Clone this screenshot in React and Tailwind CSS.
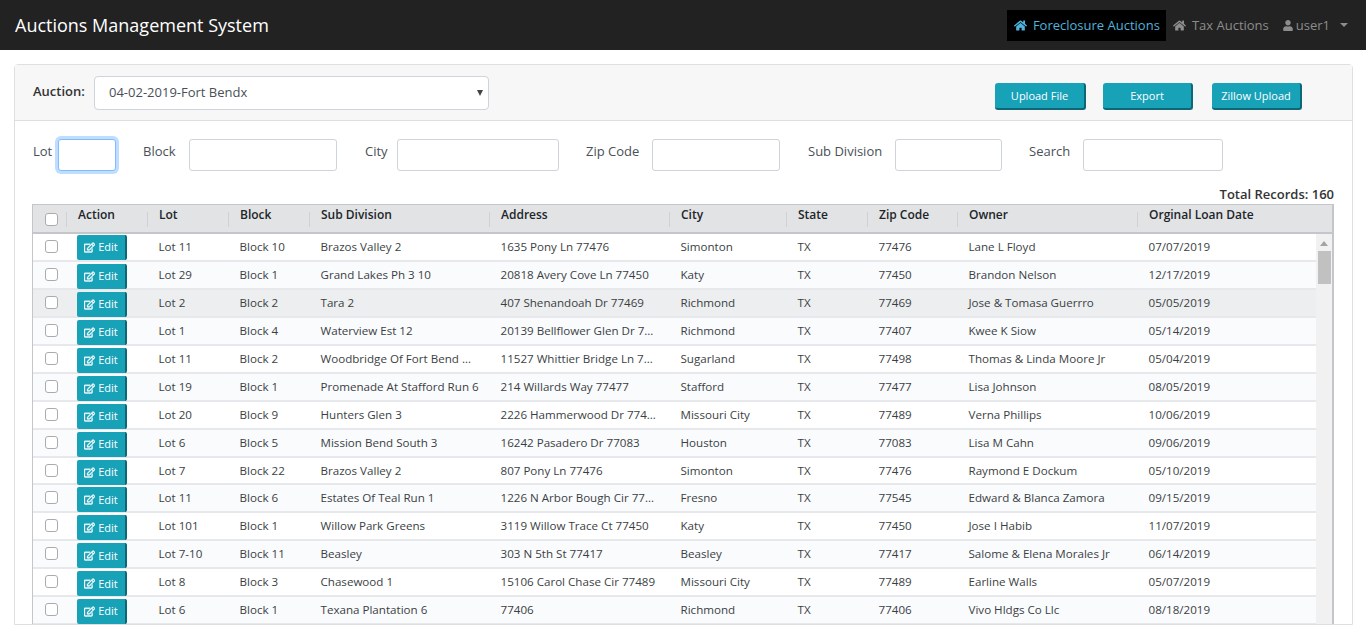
import React from "react";
import { FaHome, FaUser, FaRegEdit } from "react-icons/fa";

const rows = [
  ["Lot 11","Block 10","Brazos Valley 2","1635 Pony Ln 77476","Simonton","TX","77476","Lane L Floyd","07/07/2019"],
  ["Lot 29","Block 1","Grand Lakes Ph 3 10","20818 Avery Cove Ln 77450","Katy","TX","77450","Brandon Nelson","12/17/2019"],
  ["Lot 2","Block 2","Tara 2","407 Shenandoah Dr 77469","Richmond","TX","77469","Jose & Tomasa Guerrro","05/05/2019"],
  ["Lot 1","Block 4","Waterview Est 12","20139 Bellflower Glen Dr 77407","Richmond","TX","77407","Kwee K Siow","05/14/2019"],
  ["Lot 11","Block 2","Woodbridge Of Fort Bend Sec 5","11527 Whittier Bridge Ln 77498","Sugarland","TX","77498","Thomas & Linda Moore Jr","05/04/2019"],
  ["Lot 19","Block 1","Promenade At Stafford Run 6","214 Willards Way 77477","Stafford","TX","77477","Lisa Johnson","08/05/2019"],
  ["Lot 20","Block 9","Hunters Glen 3","2226 Hammerwood Dr 77489","Missouri City","TX","77489","Verna Phillips","10/06/2019"],
  ["Lot 6","Block 5","Mission Bend South 3","16242 Pasadero Dr 77083","Houston","TX","77083","Lisa M Cahn","09/06/2019"],
  ["Lot 7","Block 22","Brazos Valley 2","807 Pony Ln 77476","Simonton","TX","77476","Raymond E Dockum","05/10/2019"],
  ["Lot 11","Block 6","Estates Of Teal Run 1","1226 N Arbor Bough Cir 77545","Fresno","TX","77545","Edward & Blanca Zamora","09/15/2019"],
  ["Lot 101","Block 1","Willow Park Greens","3119 Willow Trace Ct 77450","Katy","TX","77450","Jose I Habib","11/07/2019"],
  ["Lot 7-10","Block 11","Beasley","303 N 5th St 77417","Beasley","TX","77417","Salome & Elena Morales Jr","06/14/2019"],
  ["Lot 8","Block 3","Chasewood 1","15106 Carol Chase Cir 77489","Missouri City","TX","77489","Earline Walls","05/07/2019"],
  ["Lot 6","Block 1","Texana Plantation 6","77406","Richmond","TX","77406","Vivo Hldgs Co Llc","08/18/2019"],
];

const heads = ["Action","Lot","Block","Sub Division","Address","City","State","Zip Code","Owner","Orginal Loan Date"];
const gridCols = "grid grid-cols-[33px_81px_81px_81px_180px_180px_117px_81px_90px_180px_1fr]";
const checkbox = "appearance-none block w-[13px] h-[13px] ml-[4px] rounded-[3px] border border-[#a9acaf] bg-white";

function Filter({ label, labelClass, inputClass, focus }) {
  return (
    <div className="flex items-center">
      <label className={`-mt-[6px] ${labelClass}`}>{label}</label>
      <input
        className={`h-[32px] rounded-[3px] bg-white outline-none ${inputClass} ${focus ? "border border-[#80bdff] shadow-[0_0_0_3px_#bfdeff]" : "border border-[#ced4da]"}`}
      />
    </div>
  );
}

function ActionButton({ label, w, ml }) {
  return (
    <button className={`h-[27px] mt-[8px] pt-[2px] ${w} ${ml} rounded-[3px] bg-[#17a2b8] border-r-2 border-b-2 border-[#0f6674] text-white text-[11px] font-medium`}>
      {label}
    </button>
  );
}

export default function App() {
  return (
    <div className="h-[625px] overflow-hidden bg-white text-[#212529] font-['Open_Sans',sans-serif] flex flex-col">
      <nav className="h-[50px] shrink-0 bg-[#222222] flex items-center pl-[15px] pr-[18px]">
        <div className="text-white text-[18px]">Auctions Management System</div>
        <div className="ml-auto flex items-center text-[13px] text-[#8c8c8c] leading-[20px]">
          <div className="h-[31px] w-[159px] bg-black text-[#4fb3dc] flex items-center pl-[7px] gap-[6px] mt-[1px]">
            <FaHome className="w-[13px] h-[13px] -mt-[1px]" />
            <span className="-mt-[1px]">Foreclosure Auctions</span>
          </div>
          <div className="flex items-center gap-[6px] ml-[7px]">
            <FaHome className="w-[13px] h-[13px]" />
            <span>Tax Auctions</span>
          </div>
          <div className="flex items-center gap-[3px] ml-[14px]">
            <FaUser className="w-[10px] h-[11px]" />
            <span>user1</span>
            <span className="ml-[7px] w-0 h-0 border-x-[4px] border-x-transparent border-t-[4px] border-t-[#8c8c8c]" />
          </div>
        </div>
      </nav>

      <div className="flex-1 min-h-0 pt-[14px] pl-[14px] pr-[13px]">
        <div className="h-full border border-[#dfdfdf] rounded-t-[4px] flex flex-col">
          <div className="h-[56px] shrink-0 bg-[#f7f7f7] border-b border-[#dfdfdf] flex items-center pl-[18px]">
            <label className="text-[13px] font-semibold w-[61px] text-[#333] -mt-[1px]">Auction:</label>
            <div className="relative w-[395px] h-[34px]">
              <select
                defaultValue="a"
                className="appearance-none h-full w-full rounded-[4px] border border-[#ced4da] bg-white text-[13px] text-[#495057] pl-[14px] outline-none"
              >
                <option value="a">04-02-2019-Fort Bendx</option>
              </select>
              <span className="absolute right-[6px] top-[14px] w-0 h-0 border-x-[3px] border-x-transparent border-t-[6px] border-t-[#444]" />
            </div>
            <ActionButton label="Upload File" w="w-[91px]" ml="ml-[506px]" />
            <ActionButton label="Export" w="w-[90px]" ml="ml-[17px]" />
            <ActionButton label="Zillow Upload" w="w-[90px]" ml="ml-[19px]" />
          </div>

          <div className="flex-1 min-h-0 flex flex-col pl-[17px] pr-[18px]">
            <div className="flex items-center h-[34px] mt-[17px] shrink-0 text-[13px] text-[#495057]">
              <Filter label="Lot" labelClass="w-[26px] pl-px" inputClass="w-[58px]" focus />
              <Filter label="Block" labelClass="w-[46px] ml-[27px]" inputClass="w-[148px]" />
              <Filter label="City" labelClass="w-[32px] ml-[28px]" inputClass="w-[162px]" />
              <Filter label="Zip Code" labelClass="w-[66px] ml-[27px]" inputClass="w-[128px]" />
              <Filter label="Sub Division" labelClass="w-[87px] ml-[28px]" inputClass="w-[107px]" />
              <Filter label="Search" labelClass="w-[54px] ml-[27px]" inputClass="w-[140px]" />
            </div>
            <div className="h-[15px] mt-[15px] text-right text-[13px] font-semibold text-[#333] leading-[15px] shrink-0">
              Total Records: 160
            </div>

            <div className="mt-[2px] flex-1 min-h-0 border-l border-t border-r-2 border-[#c4c6c9] overflow-hidden flex flex-col text-[11.6px]">
              <div className={`${gridCols} h-[29px] shrink-0 bg-[#e2e3e5] border-b-2 border-[#c4c6c9]`}>
                <div className="flex justify-center items-start pt-[8px]">
                  <input type="checkbox" className={checkbox} />
                </div>
                {heads.map((h) => (
                  <div key={h} className="mt-[7px] h-[15px] border-l border-[#cfd1d4] pl-[11px]">
                    <div className="-mt-[3px] font-semibold text-[12px] leading-[11px] text-[#212529] whitespace-nowrap">{h}</div>
                  </div>
                ))}
                <div className="mt-[7px] h-[15px] border-l border-[#cfd1d4]" />
              </div>

              <div className="flex-1 min-h-0 flex">
                <div className="flex-1 min-w-0">
                  {rows.map((r, i) => (
                    <div
                      key={i}
                      className={`${gridCols} h-[27.95px] border-b-2 border-[#e6e8eb] text-[#3b3f44] ${i === 2 ? "bg-[#eceeef]" : i % 2 ? "bg-[#fafbfd]" : "bg-white"}`}
                    >
                      <div className="flex justify-center pt-[6px]">
                        <input type="checkbox" className={checkbox} />
                      </div>
                      <div className={`pl-[11px] ${i === 0 ? "pt-[1px]" : "pt-[2px]"}`}>
                        <button className="w-[50px] h-[25px] bg-[#17a2b8] rounded-[2px] border-r-2 border-[#0f6674] text-white text-[11px] flex items-center justify-center gap-[3px]">
                          <FaRegEdit className="w-[11px] h-[11px] stroke-[20]" />
                          <span>Edit</span>
                        </button>
                      </div>
                      {r.map((c, j) => (
                        <div
                          key={j}
                          className={`leading-[25px] pl-[11.5px] whitespace-nowrap overflow-hidden text-ellipsis ${j === 3 ? "pr-[12px]" : ""} ${j === 2 ? (i === 4 ? "pr-[14px]" : "pr-[9px]") : ""}`}
                        >
                          {c}
                        </div>
                      ))}
                    </div>
                  ))}
                </div>
                <div className="w-[16px] shrink-0 bg-[#f1f1f1] flex flex-col items-center">
                  <span className="mt-[7px] w-0 h-0 border-x-[4px] border-x-transparent border-b-[5px] border-b-[#a3a3a3]" />
                  <div className="mt-[5px] w-[13px] h-[33px] bg-[#c1c1c1]" />
                </div>
              </div>
            </div>
          </div>
        </div>
      </div>
    </div>
  );
}
